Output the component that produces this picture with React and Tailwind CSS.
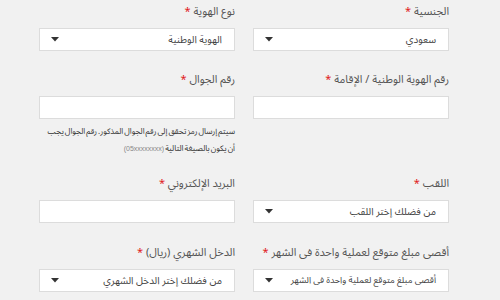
import React from "react";

function Caret() {
  return (
    <svg width="8" height="5" viewBox="0 0 8 5" className="shrink-0">
      <path d="M0 0 L8 0 L4 4.5 Z" fill="#333" />
    </svg>
  );
}

function Label({ children }) {
  return (
    <div className="h-[16px] leading-[16px] text-[11px] text-[#555] mb-[8px] whitespace-nowrap">
      {children} <span className="text-[#e02020]">*</span>
    </div>
  );
}

function Select({ value, small }) {
  return (
    <div className="h-[23px] bg-white border border-[#dcdcdc] flex items-center justify-between pr-[12px] pl-[11px] leading-[16px] text-[#444]">
      <span className={small ? "whitespace-nowrap text-[9px]" : "whitespace-nowrap text-[10px]"}>{value}</span>
      <Caret />
    </div>
  );
}

function Input() {
  return <div className="h-[23px] bg-white border border-[#dcdcdc]" />;
}

export default function App() {
  return (
    <div
      dir="rtl"
      className="w-[500px] h-[300px] overflow-hidden bg-[#f1f1f1] pr-[51px] pl-[39px] pt-[4px] font-['Noto_Sans_Arabic','DejaVu_Sans',sans-serif]"
    >
      <div className="grid grid-cols-2 gap-x-[18px]">
        <div>
          <Label>الجنسية</Label>
          <Select value="سعودي" />
        </div>
        <div>
          <Label>نوع الهوية</Label>
          <Select value="الهوية الوطنية" />
        </div>
      </div>
      <div className="grid grid-cols-2 gap-x-[18px] mt-[21px]">
        <div>
          <Label>رقم الهوية الوطنية / الإقامة</Label>
          <Input />
        </div>
        <div>
          <Label>رقم الجوال</Label>
          <Input />
          <div className="mt-[4px] text-[8px] leading-[17px] text-[#333] [word-spacing:-1px] whitespace-nowrap">
            سيتم إرسال رمز تحقق إلى رقم الجوال المذكور. رقم الجوال يجب
            <br />
            أن يكون بالصيغة التالية{" "}
            <span className="text-[7px] text-[#888] [word-spacing:0] font-['Liberation_Sans',sans-serif]">(05xxxxxxxx)</span>
          </div>
        </div>
      </div>
      <div className="grid grid-cols-2 gap-x-[18px] mt-[19px]">
        <div>
          <Label>اللقب</Label>
          <Select value="من فضلك إختر اللقب" />
        </div>
        <div>
          <Label>البريد الإلكتروني</Label>
          <Input />
        </div>
      </div>
      <div className="grid grid-cols-2 gap-x-[18px] mt-[22px]">
        <div>
          <Label>أقصى مبلغ متوقع لعملية واحدة فى الشهر</Label>
          <Select value="أقصى مبلغ متوقع لعملية واحدة فى الشهر" small />
        </div>
        <div>
          <Label>الدخل الشهري (ريال)</Label>
          <Select value="من فضلك إختر الدخل الشهري" />
        </div>
      </div>
    </div>
  );
}
